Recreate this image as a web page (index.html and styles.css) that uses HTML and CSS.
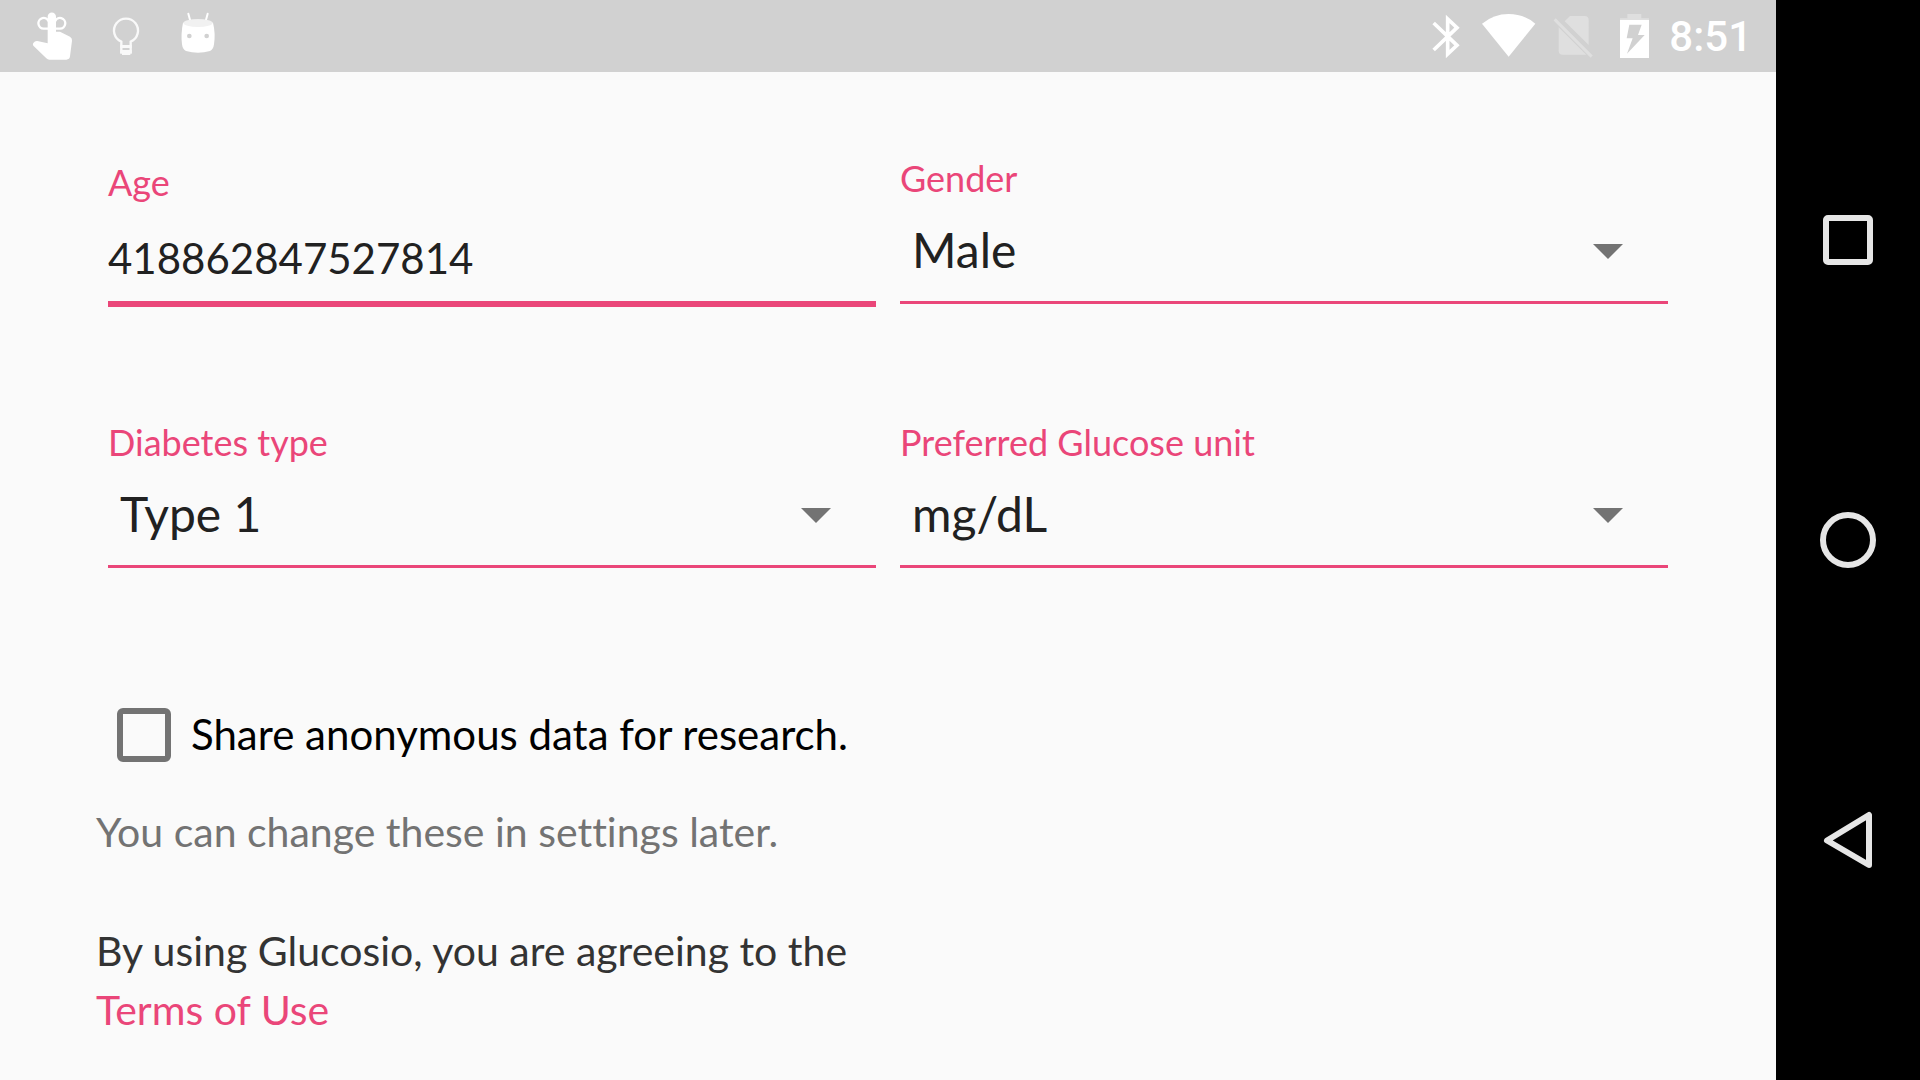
FILE: index.html
```html
<!DOCTYPE html>
<html lang="en">
<head>
<meta charset="utf-8">
<meta name="viewport" content="width=device-width, initial-scale=1">
<title>Glucosio</title>
<link rel="stylesheet" href="styles.css">
</head>
<body>
<div class="device">
  <div class="screen">
    <header class="status-bar">
      <div class="notifications">
        <svg width="42" height="72" viewBox="96 0 126 216" fill="#fff" aria-hidden="true">
          <path d="M143 130V50a12.500 12.500 0 0 1 25 0v45h12l30 15q7 4 6 12l-6 47q-1 10-11 10h-51q-5 0-9-4l-39-38q-3-4 0-8 5-7 12-6z"/>
          <path d="M146 86h-15a16 16 0 1 1 15-22M165 86h15a16 16 0 1 0-15-22" fill="none" stroke="#fff" stroke-width="7"/>
        </svg>
        <svg width="36" height="72" viewBox="324 0 108 216" aria-hidden="true">
          <path d="M364 158v-33a36 36 0 1 1 28 0v33z" fill="none" stroke="#f9f9f9" stroke-width="7"/>
          <path d="M361 135h34v9h-34zM361 150h34v9h-4v6h-25v-6h-5z" fill="#f9f9f9"/>
        </svg>
        <svg width="42" height="72" viewBox="534 0 126 216" aria-hidden="true">
          <path d="M565 41l6 22M623 41l-6 22" stroke="#fff" stroke-width="6" stroke-linecap="round"/>
          <path d="M549 68q-7 35-3 65 2 16 12 20 36 10 72 0 10-4 12-20 5-33-3-65z" fill="#fff"/>
          <ellipse cx="594" cy="69" rx="44" ry="12" fill="#f1f1f1"/>
          <circle cx="568" cy="108" r="7" fill="#d1d1d1"/><circle cx="620" cy="108" r="7" fill="#d1d1d1"/>
        </svg>
      </div>
      <div class="system">
        <svg width="34" height="72" viewBox="60 0 102 216" aria-hidden="true">
          <path d="M68 69l70 67-28 26V57l28 26-70 67" fill="none" stroke="#fff" stroke-width="11"/>
        </svg>
        <svg width="56" height="72" viewBox="210 0 168 216" aria-hidden="true">
          <path d="M213 71Q248 42 293 42t80 29l-80 99z" fill="#fff"/>
        </svg>
        <svg width="44" height="72" viewBox="426 0 132 216" aria-hidden="true">
          <path d="M461 64l16-16h44q12 0 12 12v75zM443 82l83 82h-71q-12 0-12-12z" fill="#dfdfdf"/>
          <path d="M431 58l111 112" stroke="#dfdfdf" stroke-width="9"/>
        </svg>
        <svg width="40" height="72" viewBox="606 0 120 216" aria-hidden="true">
          <path d="M627 60v-5h22V42h42v13h23v5z" fill="#dfdfdf"/>
          <path d="M627 60h87v114h-87zM655 74l-8 41h18l-17 46 53-56h-20l11-31z" fill="#fff" fill-rule="evenodd"/>
        </svg>
        <time class="clock">8:51</time>
      </div>
    </header>

    <main>
      <form class="form">
        <div class="fields">
          <div class="field field-text">
            <label for="age">Age</label>
            <input id="age" type="text" inputmode="numeric" value="418862847527814">
          </div>
          <div class="field">
            <label for="gender">Gender</label>
            <div class="spinner">
              <select id="gender"><option>Male</option><option>Female</option><option>Other</option></select>
              <svg width="30" height="15" viewBox="0 0 30 15" aria-hidden="true"><path d="M0 0h30L15 15z"/></svg>
            </div>
          </div>
          <div class="field">
            <label for="type">Diabetes type</label>
            <div class="spinner">
              <select id="type"><option>Type 1</option><option>Type 2</option></select>
              <svg width="30" height="15" viewBox="0 0 30 15" aria-hidden="true"><path d="M0 0h30L15 15z"/></svg>
            </div>
          </div>
          <div class="field">
            <label for="unit">Preferred Glucose unit</label>
            <div class="spinner">
              <select id="unit"><option>mg/dL</option><option>mmol/L</option></select>
              <svg width="30" height="15" viewBox="0 0 30 15" aria-hidden="true"><path d="M0 0h30L15 15z"/></svg>
            </div>
          </div>
        </div>
        <div class="share">
          <input id="share" type="checkbox">
          <label for="share">Share anonymous data for research.</label>
        </div>
        <p class="hint">You can change these in settings later.</p>
        <p class="terms">By using Glucosio, you are agreeing to the<br><a href="#terms">Terms of Use</a></p>
      </form>
    </main>
  </div>

  <nav class="nav-bar" aria-label="System navigation">
    <button type="button" aria-label="Overview">
      <svg width="60" height="60" viewBox="0 0 60 60"><rect x="8" y="8" width="44" height="44" rx="2"/></svg>
    </button>
    <button type="button" aria-label="Home">
      <svg width="60" height="60" viewBox="0 0 60 60"><circle cx="30" cy="30" r="25"/></svg>
    </button>
    <button type="button" aria-label="Back">
      <svg width="60" height="60" viewBox="0 0 60 60"><path d="M51 5v50L9 30.500z"/></svg>
    </button>
  </nav>
</div>
</body>
</html>
```
FILE: styles.css
```css
:root {
  --pink: #ea4679;
  --text: #212121;
  --muted: #737373;
}

* {
  box-sizing: border-box;
}

body {
  margin: 0;
  background: #fafafa;
  color: var(--text);
  font-family: Lato, "Open Sans", sans-serif;
  font-size: 42px;
  font-variant-ligatures: none;
}

svg {
  display: block;
}

.device {
  display: flex;
  min-height: 100vh;
}

.screen {
  flex: 1;
  min-width: 0;
}

.status-bar {
  display: flex;
  justify-content: space-between;
  height: 72px;
  padding: 0 24px 0 32px;
  background: #d1d1d1;
}

.notifications {
  display: flex;
  gap: 34px;
}

.system {
  display: flex;
  gap: 16px;
}

.clock {
  padding-top: 2px;
  color: #fff;
  font: 500 42px/70px Roboto, sans-serif;
}

.form {
  padding: 84px 108px 24px 96px;
}

.fields {
  display: grid;
  grid-template-columns: 1fr 1fr;
  align-items: start;
  gap: 113px 24px;
  padding-left: 12px;
}

.field label {
  display: block;
  color: var(--pink);
  font-size: 36px;
  line-height: 44px;
}

.field-text {
  padding-top: 4px;
}

.field input,
.field select {
  display: block;
  width: 100%;
  margin: 0;
  border: 0;
  border-radius: 0;
  background: transparent;
  color: var(--text);
  font-family: inherit;
  outline: 0;
  appearance: none;
}

.field input {
  height: 103px;
  padding: 10px 0 0;
  border-bottom: 6px solid var(--pink);
  font-size: 42px;
}

.spinner {
  display: grid;
  align-items: center;
  border-bottom: 3px solid var(--pink);
}

.spinner select,
.spinner svg {
  grid-area: 1 / 1;
}

.spinner select {
  height: 101px;
  padding: 0 84px 2px 12px;
  font-size: 48px;
}

.spinner svg {
  justify-self: end;
  margin: 2px 45px 0 0;
  fill: var(--muted);
  pointer-events: none;
}

.share {
  display: flex;
  align-items: center;
  gap: 20px;
  margin-top: 140px;
  padding-left: 21px;
  color: #000;
}

.share label {
  padding-bottom: 2px;
}

.share input {
  width: 54px;
  height: 54px;
  margin: 0;
  border: 6px solid var(--muted);
  border-radius: 6px;
  appearance: none;
}

.share input:checked {
  background: var(--pink);
}

.hint,
.terms {
  font-size: 41px;
  line-height: 59px;
}

.hint {
  margin: 40px 0 0;
  color: var(--muted);
}

.terms {
  margin: 60px 0 0;
  color: #333;
}

.terms a {
  color: var(--pink);
  text-decoration: none;
}

.nav-bar {
  display: flex;
  flex-direction: column;
  width: 144px;
  padding: 90px 0;
  background: #000;
}

.nav-bar button {
  display: flex;
  flex: 1;
  align-items: center;
  justify-content: center;
  padding: 0;
  border: 0;
  background: transparent;
}

.nav-bar svg {
  fill: none;
  stroke: #e6e6e6;
  stroke-width: 6;
  stroke-linejoin: round;
}
```
